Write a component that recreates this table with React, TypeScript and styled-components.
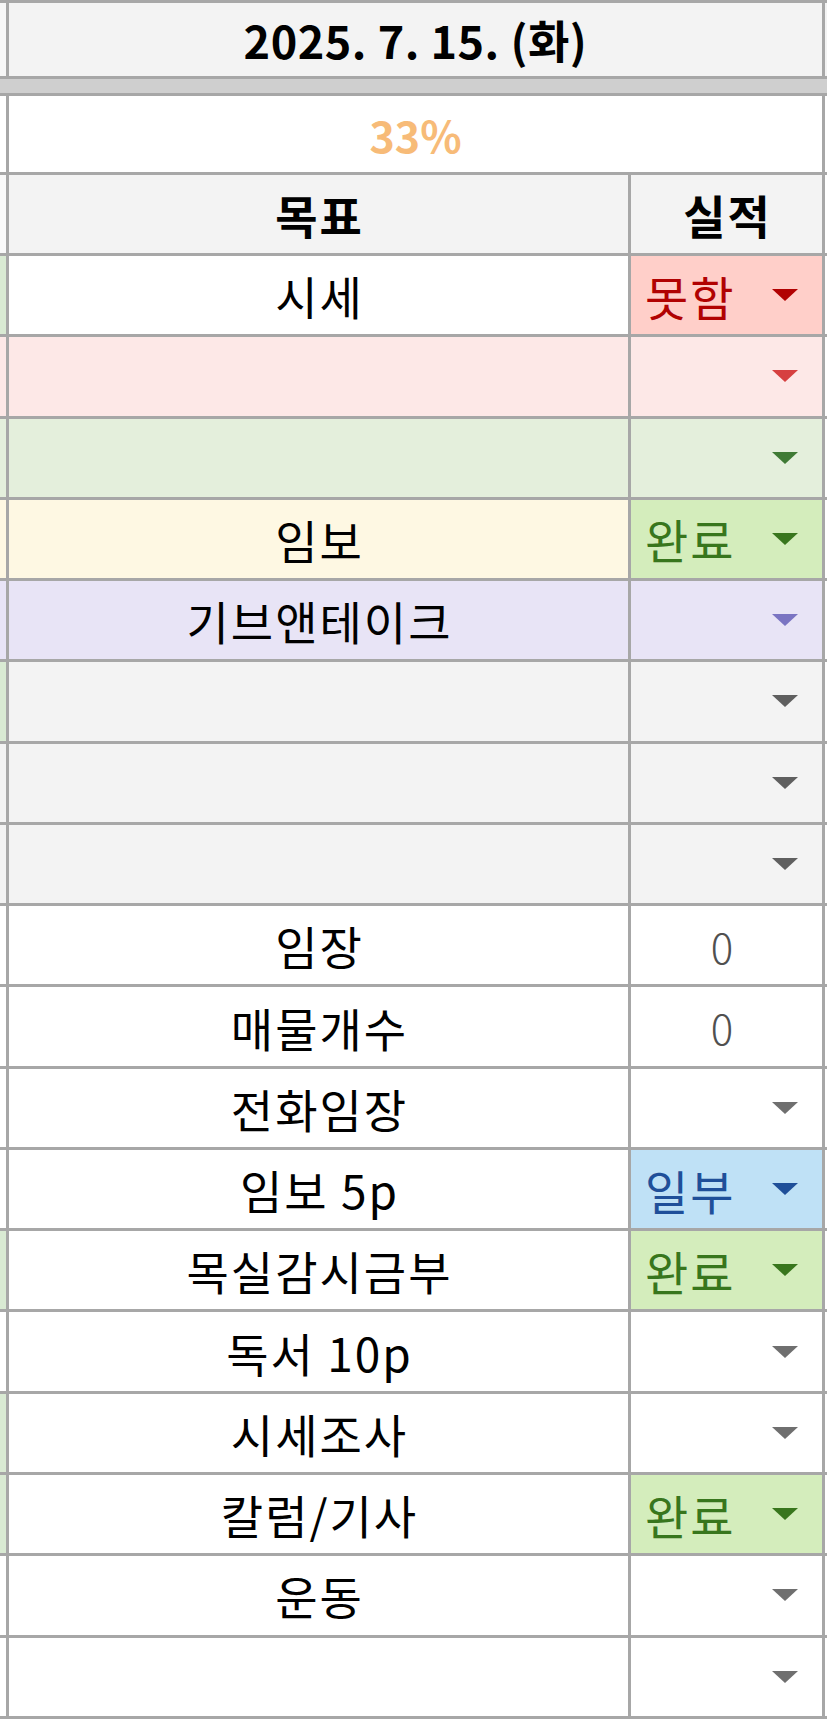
import React from 'react';
import styled, { createGlobalStyle } from 'styled-components';

const LINE = '#a7a7a7';

const GlobalStyle = createGlobalStyle`
  html, body {
    margin: 0;
    padding: 0;
    background: #ffffff;
  }
  body {
    font-family: "Noto Sans CJK KR", "Noto Sans", sans-serif;
    color: #000;
  }
`;

const Sheet = styled.div`
  width: 827px;
  height: 1726px;
  display: flex;
  flex-direction: column;
  border-top: 3px solid ${LINE};
  box-sizing: border-box;
  overflow: hidden;
`;

const MergedRow = styled.div<{ $height: number; $fill: string }>`
  display: grid;
  grid-template-columns: 9px 1fr 2px;
  height: ${p => p.$height}px;
  background: ${p => p.$fill};
  border-bottom: 3px solid ${LINE};
  box-sizing: content-box;
`;

const FreezeBar = styled.div`
  height: 14px;
  background: #cfcfcf;
  border-bottom: 3px solid ${LINE};
`;

const Side = styled.div<{ $fill?: string }>`
  background: ${p => p.$fill || 'transparent'};
  border-right: 3px solid ${LINE};
`;

const Title = styled.div`
  display: flex;
  align-items: center;
  justify-content: center;
  border-right: 3px solid ${LINE};
  font-size: 45px;
  font-weight: 700;
  letter-spacing: 0.5px;
`;

const Percent = styled(Title)`
  color: #f7bb78;
  background: #ffffff;
  font-size: 43px;
  letter-spacing: 0;
`;

const Row = styled.div<{ $height: number }>`
  display: grid;
  grid-template-columns: 9px 622px 194px 2px;
  height: ${p => p.$height}px;
  border-bottom: 3px solid ${LINE};
`;

const Goal = styled.div<{ $fill?: string; $bold?: boolean }>`
  display: flex;
  align-items: center;
  justify-content: center;
  padding-left: 2px;
  background: ${p => p.$fill || '#ffffff'};
  border-right: 3px solid ${LINE};
  font-size: 46px;
  font-weight: ${p => (p.$bold ? 700 : 400)};
  letter-spacing: 2px;
  white-space: pre;
`;

const Result = styled.div<{ $fill?: string; $color?: string; $center?: boolean }>`
  display: flex;
  align-items: center;
  justify-content: ${p => (p.$center ? 'center' : 'space-between')};
  padding: 0 23px 0 14px;
  background: ${p => p.$fill || '#ffffff'};
  color: ${p => p.$color || '#000'};
  border-right: 3px solid ${LINE};
  font-size: 47px;
  font-weight: 400;
  letter-spacing: 2px;
  white-space: nowrap;
`;

const Zero = styled.span`
  color: #505050;
  font-size: 42px;
  font-weight: 300;
  padding-left: 2px;
`;

const Arrow = ({ color }: { color: string }) => (
  <svg width="28" height="14" viewBox="0 0 28 14" style={{ marginLeft: 'auto' }}>
    <polygon points="1,1 27,1 14,13" fill={color} />
  </svg>
);

type Tone = { fill: string; text: string; arrow: string };

const tones: Record<string, Tone> = {
  red: { fill: '#ffcfc9', text: '#b10202', arrow: '#b10202' },
  green: { fill: '#d4edbc', text: '#38761d', arrow: '#38761d' },
  blue: { fill: '#bfe1f6', text: '#1f4f99', arrow: '#1f4f99' },
};

type Item = {
  goal: string;
  fill?: string;
  side?: string;
  value?: string;
  tone?: string;
  arrow?: string;
  number?: string;
};

const GREEN_SIDE = '#d9ead3';
const GREY = '#f3f3f3';

const items: Item[] = [
  { goal: '시세', side: GREEN_SIDE, value: '못함', tone: 'red' },
  { goal: '', fill: '#fde8e7', side: '#fde8e7', arrow: '#d64040' },
  { goal: '', fill: '#e4efdc', side: '#e4efdc', arrow: '#3f7a35' },
  { goal: '임보', fill: '#fef8e3', side: '#fef8e3', value: '완료', tone: 'green' },
  { goal: '기브앤테이크', fill: '#e8e4f6', side: '#e8e4f6', arrow: '#7a74c2' },
  { goal: '', fill: GREY, side: GREEN_SIDE, arrow: '#5f5f5f' },
  { goal: '', fill: GREY, side: GREY, arrow: '#5f5f5f' },
  { goal: '', fill: GREY, side: GREY, arrow: '#5f5f5f' },
  { goal: '임장', number: '0' },
  { goal: '매물개수', number: '0' },
  { goal: '전화임장', arrow: '#6f6f6f' },
  { goal: '임보 5p', value: '일부', tone: 'blue' },
  { goal: '목실감시금부', side: GREEN_SIDE, value: '완료', tone: 'green' },
  { goal: '독서 10p', arrow: '#6f6f6f' },
  { goal: '시세조사', side: GREEN_SIDE, arrow: '#6f6f6f' },
  { goal: '칼럼/기사', side: GREEN_SIDE, value: '완료', tone: 'green' },
  { goal: '운동', arrow: '#6f6f6f' },
  { goal: '', arrow: '#6f6f6f' },
];

const ROW_H = 78.28;

const ResultCell = ({ item }: { item: Item }) => {
  if (item.number !== undefined) {
    return (
      <Result $fill={item.fill} $center>
        <Zero>{item.number}</Zero>
      </Result>
    );
  }
  const tone = item.tone ? tones[item.tone] : undefined;
  return (
    <Result $fill={tone ? tone.fill : item.fill} $color={tone?.text}>
      {item.value && <span>{item.value}</span>}
      <Arrow color={tone ? tone.arrow : item.arrow || '#6f6f6f'} />
    </Result>
  );
};

export default function App() {
  return (
    <>
      <GlobalStyle />
      <Sheet>
        <MergedRow $height={73} $fill={GREY}>
          <Side $fill="#f7f7f7" />
          <Title>2025. 7. 15. (화)</Title>
          <div />
        </MergedRow>
        <FreezeBar />
        <MergedRow $height={76} $fill="#ffffff">
          <Side />
          <Percent>33%</Percent>
          <div />
        </MergedRow>
        <Row $height={78}>
          <Side $fill="#f9f9f9" />
          <Goal $fill={GREY} $bold>목표</Goal>
          <Goal $fill={GREY} $bold>실적</Goal>
          <div />
        </Row>
        {items.map((item, i) => (
          <Row key={i} $height={ROW_H}>
            <Side $fill={item.side} />
            <Goal $fill={item.fill}>{item.goal}</Goal>
            <ResultCell item={item} />
            <div />
          </Row>
        ))}
      </Sheet>
    </>
  );
}
